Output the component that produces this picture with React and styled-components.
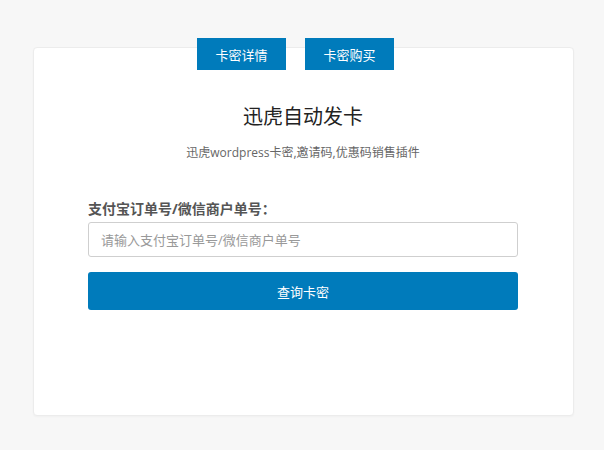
import React from "react";
import styled, { createGlobalStyle } from "styled-components";

const Global = createGlobalStyle`
  html, body { margin: 0; padding: 0; background: #f7f7f7; }
  body { font-family: "Open Sans", "Noto Sans CJK SC", sans-serif; color: #333; }
  * { box-sizing: border-box; }
`;

const Page = styled.div`
  padding: 38px 30px 34px 33px;
`;

const TabBar = styled.div`
  position: relative;
  z-index: 1;
  display: flex;
  justify-content: center;
  gap: 19px;
  padding-right: 16px;
  margin-bottom: -23px;
`;

const Tab = styled.a`
  display: flex;
  align-items: center;
  justify-content: center;
  width: 89px;
  height: 32px;
  background: #007bbb;
  color: #fff;
  font-size: 13px;
  text-decoration: none;
  cursor: pointer;
`;

const Card = styled.div`
  background: #fff;
  border: 1px solid #ececec;
  border-radius: 4px;
  box-shadow: 0 1px 2px rgba(0, 0, 0, 0.03);
  height: 369px;
  padding: 54px 55px 0 54px;
  display: flex;
  flex-direction: column;
`;

const Title = styled.h2`
  margin: 0;
  text-align: center;
  font-size: 20px;
  line-height: 30px;
  font-weight: 400;
  color: #222;
`;

const Subtitle = styled.p`
  margin: 10px 0 0;
  text-align: center;
  font-size: 12px;
  line-height: 21px;
  color: #666;
`;

const Label = styled.label`
  margin-top: 36px;
  font-size: 14px;
  line-height: 20px;
  font-weight: 700;
  color: #555;
`;

const Input = styled.input`
  margin-top: 3px;
  height: 35px;
  width: 100%;
  border: 1px solid #cfcfcf;
  border-radius: 3px;
  padding: 0 12px;
  font-size: 13px;
  font-family: inherit;
  color: #333;
  outline: none;
  &::placeholder { color: #999; }
`;

const Button = styled.button`
  margin-top: 15px;
  height: 38px;
  width: 100%;
  border: none;
  border-radius: 3px;
  background: #007bbb;
  color: #fff;
  font-size: 13px;
  font-family: inherit;
  cursor: pointer;
`;

export default function App() {
  return (
    <>
      <Global />
      <Page>
        <TabBar>
          <Tab>卡密详情</Tab>
          <Tab>卡密购买</Tab>
        </TabBar>
        <Card>
          <Title>迅虎自动发卡</Title>
          <Subtitle>迅虎wordpress卡密,邀请码,优惠码销售插件</Subtitle>
          <Label>支付宝订单号/微信商户单号：</Label>
          <Input placeholder="请输入支付宝订单号/微信商户单号" />
          <Button>查询卡密</Button>
        </Card>
      </Page>
    </>
  );
}
